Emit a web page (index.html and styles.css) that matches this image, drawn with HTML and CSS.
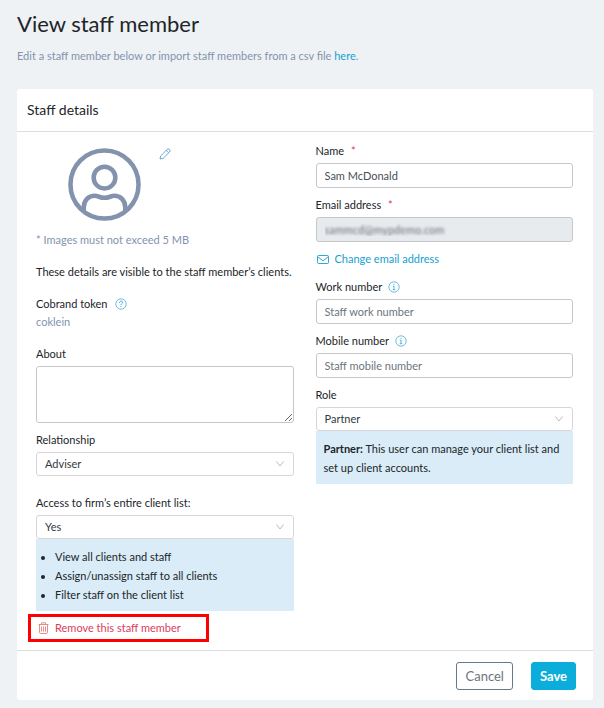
FILE: index.html
```html
<!DOCTYPE html>
<html lang="en">
<head>
<meta charset="utf-8">
<title>View staff member</title>
<link rel="stylesheet" href="styles.css">
</head>
<body>
<main>
  <h1>View staff member</h1>
  <p class="intro">Edit a staff member below or import staff members from a csv file <a href="#">here</a>.</p>

  <form class="card">
    <h2>Staff details</h2>
    <div class="columns">
      <div class="column profile">
        <div class="photo">
          <svg class="avatar" viewBox="0 0 74 74" fill="none" stroke="currentColor" stroke-width="4.6" aria-hidden="true">
            <circle cx="37" cy="37" r="34.5"/>
            <circle cx="37" cy="30" r="11"/>
            <path d="M16 63V60C16 53 21 48.5 27 48.5C31 48.5 32 50.5 37 50.5S43 48.5 47 48.5C53 48.5 58 53 58 60V63"/>
          </svg>
          <button type="button" class="edit" aria-label="Edit photo">
            <svg viewBox="0 0 12 12" fill="none" stroke="currentColor" stroke-width=".8" stroke-linejoin="round">
              <path d="M1 11L1.7 7.9L8 1.6Q9 .5 10 1.1L10.8 1.9Q11.6 2.9 10.5 4L4.2 10.3ZM7.2 2.4L9.7 4.8"/>
            </svg>
          </button>
        </div>
        <p class="muted note">* Images must not exceed 5 MB</p>
        <p class="spaced">These details are visible to the staff member’s clients.</p>
        <p class="spaced token">Cobrand token
          <svg class="hint" viewBox="0 0 12 12" fill="none" stroke="currentColor" aria-hidden="true"><circle cx="6" cy="6" r="5.2" stroke-width=".7"/><path d="M4.5 4.8C4.5 2.5 7.6 2.6 7.6 4.5C7.6 5.6 6 5.6 6 7.1M6 8V9" stroke-width=".9"/></svg>
        </p>
        <p class="muted">coklein</p>
        <label class="spaced" for="about">About</label>
        <textarea id="about"></textarea>
        <label for="relationship">Relationship</label>
        <select id="relationship"><option>Adviser</option></select>
        <label class="access" for="access">Access to firm’s entire client list:</label>
        <select id="access"><option>Yes</option></select>
        <ul class="info">
          <li>View all clients and staff</li>
          <li>Assign/unassign staff to all clients</li>
          <li>Filter staff on the client list</li>
        </ul>
        <button type="button" class="remove">
          <svg viewBox="0 0 11 12" fill="none" stroke="currentColor" stroke-width=".9" aria-hidden="true"><path d="M.5 2.5H10.5M3.5 2.5V.8H7.5V2.5M1.5 2.5V10.3Q1.5 11.5 2.7 11.5H8.3Q9.5 11.5 9.5 10.3V2.5M3.5 4.5V9.5M5.5 4.5V9.5M7.5 4.5V9.5"/></svg>
          Remove this staff member
        </button>
      </div>

      <div class="column contact">
        <label for="name">Name <span class="required">*</span></label>
        <input id="name" type="text" value="Sam McDonald">
        <label for="email">Email address <span class="required">*</span></label>
        <input id="email" class="obscured" type="email" value="sammcd@mypdemo.com" disabled>
        <a class="change" href="#">
          <svg viewBox="0 0 12 9" fill="none" stroke="currentColor" stroke-width=".9" aria-hidden="true"><rect x=".5" y=".5" width="11" height="8" rx="1"/><path d="M.8 1.8L6 5.8L11.2 1.8"/></svg>
          Change email address</a>
        <label for="work">Work number
          <svg class="hint" viewBox="0 0 12 12" fill="none" stroke="currentColor" aria-hidden="true"><circle cx="6" cy="6" r="5.2" stroke-width=".7"/><path d="M6 2.8V3.9M4.9 5.2H6V8.7M4.7 8.7H7.3" stroke-width=".8"/></svg>
        </label>
        <input id="work" type="tel" placeholder="Staff work number">
        <label for="mobile">Mobile number
          <svg class="hint" viewBox="0 0 12 12" fill="none" stroke="currentColor" aria-hidden="true"><circle cx="6" cy="6" r="5.2" stroke-width=".7"/><path d="M6 2.8V3.9M4.9 5.2H6V8.7M4.7 8.7H7.3" stroke-width=".8"/></svg>
        </label>
        <input id="mobile" type="tel" placeholder="Staff mobile number">
        <label for="role">Role</label>
        <select id="role"><option>Partner</option></select>
        <p class="info"><strong>Partner:</strong> This user can manage your client list and set up client accounts.</p>
      </div>
    </div>
    <footer>
      <button type="button" class="button">Cancel</button>
      <button type="submit" class="button primary">Save</button>
    </footer>
  </form>
</main>
</body>
</html>
```

FILE: styles.css
```css
* { box-sizing: border-box; }
body {
  margin: 0;
  background: #eef2f5;
  color: #212529;
  font: 11px/18px Lato, "Liberation Sans", sans-serif;
}
main { padding: 10px 11px 8px 17px; }
h1, h2, p, ul { margin: 0; }
h1 { font-size: 22px; line-height: 28px; font-weight: 400; }
a { color: #169fd0; text-decoration: none; }
.intro { margin-top: 9px; color: #8393ad; }
.card { margin-top: 24px; background: #fff; border-radius: 3px; }
h2 {
  padding: 11px 10px;
  border-bottom: 1px solid #dcdfe1;
  font-size: 14px;
  line-height: 20px;
  font-weight: 400;
}
.columns {
  display: grid;
  grid-template-columns: 1fr 1fr;
  gap: 22px;
  padding: 0 20px 8px 19px;
}
.column { display: flex; flex-direction: column; min-width: 0; }
.profile { padding-top: 16px; }
.contact { padding-top: 2px; }
.photo { display: flex; align-items: flex-start; gap: 18px; padding-left: 32px; color: #8393ad; }
.avatar { width: 73px; height: 73px; }
.edit { width: 13px; height: 12px; padding: 0; border: 0; background: none; color: #4e93bf; }
.edit svg { display: block; width: 12px; height: 12px; }
.muted { color: #8393ad; }
.note { margin-top: 10px; }
label { margin-top: 8px; }
.spaced { margin-top: 14px; }
.access { margin-top: 18px; }
.hint { width: 12px; height: 12px; margin-left: 3px; color: #2ea2d3; vertical-align: -2px; }
.token .hint { margin-left: 5px; }
.required { margin-left: 4px; color: #dc3c61; }
input, select, textarea {
  width: 100%;
  margin: 3px 0 0;
  border: 1px solid #c5c7c9;
  border-radius: 3px;
  background: #fff;
  color: #495057;
  font: inherit;
}
input { height: 25px; padding: 0 8px; }
input::placeholder { color: #6c757d; opacity: 1; }
textarea { display: block; height: 57px; resize: vertical; }
select {
  height: 24px;
  padding: 0 8px;
  border-color: #dcd5d8;
  color: #343a40;
  appearance: none;
  background: #fff url("data:image/svg+xml,%3Csvg xmlns='http://www.w3.org/2000/svg' width='8' height='6' fill='none' stroke='%23bbb'%3E%3Cpath d='M.5.5L4 5L7.5.5'/%3E%3C/svg%3E") no-repeat right 9px center;
}
.obscured {
  background: #e8ebee;
  color: transparent;
  text-shadow: 0 0 3px #686f76;
}
.change { display: flex; align-items: center; gap: 6px; margin: 8px 0 2px; padding-left: 1px; }
.change svg { width: 12px; height: 9px; }
.info { padding: 8px 8px 7px; background: #d9ecf7; line-height: 19px; }
ul.info { padding-left: 19px; }
.remove {
  display: flex;
  align-items: center;
  align-self: flex-start;
  gap: 6px;
  height: 28px;
  margin: 3px 0 0 -8px;
  padding: 0 25px 0 7px;
  border: 3px solid #f00;
  background: none;
  color: #dc3c61;
  font: inherit;
}
.remove svg { width: 11px; height: 12px; color: #e48078; }
footer {
  display: flex;
  justify-content: flex-end;
  gap: 18px;
  padding: 11px 17px 10px;
  border-top: 1px solid #dcdfe1;
}
.button {
  height: 28px;
  padding: 0 8px;
  border: 1px solid #65798b;
  border-radius: 3px;
  background: #fff;
  color: #6c757d;
  font: inherit;
  font-size: 13px;
}
.primary { border-color: #0badda; background: #0badda; color: #fff; font-weight: 700; }
```
